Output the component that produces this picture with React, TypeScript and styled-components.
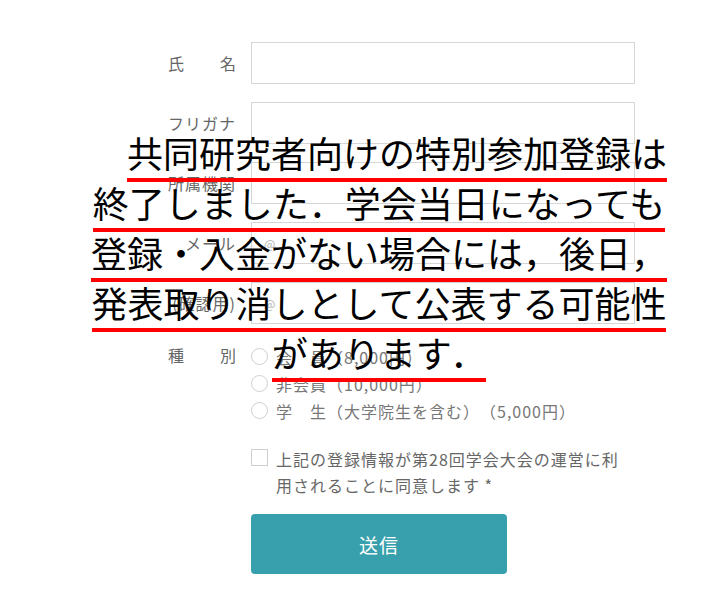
import React from 'react';
import styled, { createGlobalStyle } from 'styled-components';

const GlobalStyle = createGlobalStyle`
  body {
    margin: 0;
    background: #fff;
    font-family: "Noto Sans CJK JP", "Noto Sans", sans-serif;
    text-spacing-trim: space-all;
  }
`;

const Page = styled.div`
  position: relative;
  width: 720px;
  height: 607px;
  overflow: hidden;
`;

const Form = styled.form`
  display: grid;
  grid-template-columns: 86px 384px;
  column-gap: 15px;
  row-gap: 18px;
  padding: 42px 0 0 150px;
`;

const Label = styled.label<{ $spread?: boolean; $top?: boolean }>`
  font-size: 16px;
  letter-spacing: 1px;
  color: #666;
  text-align: right;
  align-self: ${({ $top }) => ($top ? 'start' : 'center')};
  line-height: 27px;
  ${({ $spread }) =>
    $spread &&
    `
    justify-self: end;
    width: 68px;
    text-align: justify;
    text-align-last: justify;
    letter-spacing: 0;
  `}
`;

const TextInput = styled.input`
  box-sizing: border-box;
  width: 384px;
  height: 42px;
  border: 1px solid #d6d6d6;
  padding: 0 12px;
  font-family: inherit;
  font-size: 12px;
  outline: none;
  &::placeholder {
    color: #b0b0b0;
  }
`;

const RadioGroup = styled.div`
  display: flex;
  flex-direction: column;
  margin-top: 1px;
`;

const Choice = styled.label`
  display: flex;
  align-items: center;
  gap: 8px;
  height: 27px;
  font-size: 16px;
  color: #777;
  letter-spacing: 1px;
`;

const Circle = styled.span`
  box-sizing: border-box;
  width: 17px;
  height: 17px;
  border-radius: 50%;
  border: 1px solid #cfcfcf;
  background: #fff;
  flex-shrink: 0;
`;

const Agree = styled.label`
  grid-column: 2;
  display: flex;
  align-items: flex-start;
  gap: 8px;
  margin-top: 4px;
`;

const Box = styled.span`
  box-sizing: border-box;
  width: 17px;
  height: 17px;
  margin-top: 3px;
  border: 1px solid #cfcfcf;
  background: #fff;
  flex-shrink: 0;
`;

const AgreeText = styled.span`
  width: 352px;
  font-size: 16px;
  letter-spacing: 1px;
  line-height: 26px;
  color: #666;
`;

const Submit = styled.button`
  grid-column: 2;
  width: 256px;
  height: 60px;
  margin-top: -2px;
  border: none;
  border-radius: 4px;
  background: #389fad;
  color: #fff;
  font-family: inherit;
  font-size: 19px;
  letter-spacing: 1px;
`;

const Notice = styled.div`
  position: absolute;
  left: 90px;
  top: 132px;
  width: 578px;
  font-family: "Noto Sans CJK JP", sans-serif;
  font-size: 36px;
  color: #000;
`;

const NoticeLine = styled.div<{ $indent?: boolean }>`
  display: flex;
  justify-content: center;
  height: 50px;
  padding-left: ${({ $indent }) => ($indent ? '36px' : '0')};
`;

const Marked = styled.span`
  display: block;
  line-height: 40px;
  padding-bottom: 6px;
  border-bottom: 4px solid #f00;
`;

const fields = [
  { label: '氏名', spread: true, placeholder: '' },
  { label: 'フリガナ', placeholder: '' },
  { label: '所属機関', placeholder: '' },
  { label: 'メール', placeholder: '@' },
  { label: '(確認用)', placeholder: '@' },
];

const kinds = ['会　員（8,000円）', '非会員（10,000円）', '学　生（大学院生を含む）（5,000円）'];

const notice = [
  '共同研究者向けの特別参加登録は',
  '終了しました．学会当日になっても',
  '登録・入金がない場合には，後日，',
  '発表取り消しとして公表する可能性',
  'があります．',
];

const App: React.FC = () => {
  return (
    <Page>
      <GlobalStyle />
      <Form onSubmit={(e) => e.preventDefault()}>
        {fields.map((f) => (
          <React.Fragment key={f.label}>
            <Label $spread={f.spread}>{f.label}</Label>
            <TextInput type="text" placeholder={f.placeholder} />
          </React.Fragment>
        ))}
        <Label $spread $top>
          種別
        </Label>
        <RadioGroup>
          {kinds.map((k) => (
            <Choice key={k}>
              <Circle />
              {k}
            </Choice>
          ))}
        </RadioGroup>
        <Agree>
          <Box />
          <AgreeText>上記の登録情報が第28回学会大会の運営に利用されることに同意します *</AgreeText>
        </Agree>
        <Submit type="submit">送信</Submit>
      </Form>
      <Notice>
        {notice.map((line, i) => (
          <NoticeLine key={line} $indent={i === 0}>
            <Marked>{line}</Marked>
          </NoticeLine>
        ))}
      </Notice>
    </Page>
  );
};

export default App;
